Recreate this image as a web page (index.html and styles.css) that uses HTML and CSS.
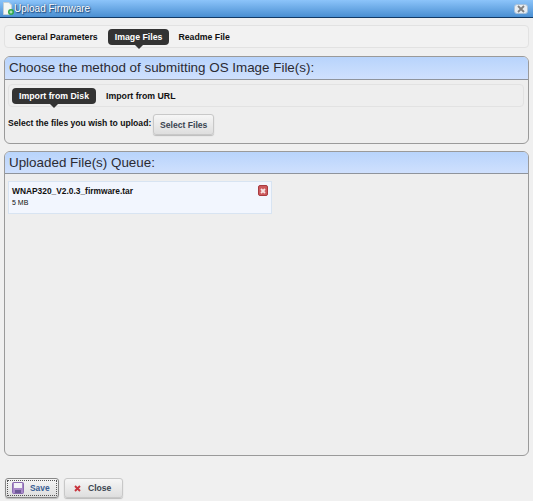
FILE: index.html
```html
<!DOCTYPE html>
<html lang="en">
<head>
<meta charset="UTF-8" />
<title>Upload Firmware</title>
<link rel="stylesheet" href="styles.css">
</head>
<body>
<div class="dialog">
  <div class="titlebar">
    <svg class="title-icon" width="11" height="13" viewBox="0 0 11 13">
      <path d="M0.5 0.5h5.5l2.5 2.5v9.5H0.5z" fill="#f4f6f4" stroke="#c5cfd5"/>
      <circle cx="8" cy="10" r="3" fill="#2fa84a"/>
      <path d="M8 8.5v3M6.5 10h3" stroke="#d8f5dc" stroke-width="1"/>
    </svg>
    <span class="title-text">Upload Firmware</span>
    <button type="button" class="title-close" aria-label="Close">
      <svg width="8" height="8" viewBox="0 0 8 8"><path d="M1 1l6 6M7 1L1 7" stroke="#808080" stroke-width="1.8"/></svg>
    </button>
  </div>

  <div class="content">
    <div class="tabs">
      <span class="tab">General Parameters</span>
      <span class="tab tab-active">Image Files</span>
      <span class="tab">Readme File</span>
    </div>

    <div class="panel panel-method">
      <div class="panel-head">Choose the method of submitting OS Image File(s):</div>
      <div class="panel-body">
        <div class="tabs tabs-sub">
          <span class="tab tab-active">Import from Disk</span>
          <span class="tab">Import from URL</span>
        </div>
        <div class="select-row">
          <span class="select-label">Select the files you wish to upload:</span>
          <button type="button" class="btn btn-select">Select Files</button>
        </div>
      </div>
    </div>

    <div class="panel panel-queue">
      <div class="panel-head">Uploaded File(s) Queue:</div>
      <div class="panel-body">
        <div class="file-item">
          <div>
            <div class="file-name">WNAP320_V2.0.3_firmware.tar</div>
            <div class="file-size">5 MB</div>
          </div>
          <span class="file-remove">
            <svg width="6" height="6" viewBox="0 0 6 6"><path d="M1 1l4 4M5 1L1 5" stroke="#f6e3e3" stroke-width="1.8"/></svg>
          </span>
        </div>
      </div>
    </div>

    <div class="actions">
      <button type="button" class="btn btn-save">
        <span class="focus-ring">
          <svg width="12" height="12" viewBox="0 0 12 12">
            <rect x="0.5" y="0.5" width="11" height="11" rx="1" fill="#a888c8" stroke="#8a6bb0"/>
            <rect x="2" y="1" width="8" height="5" fill="#f2f2f6"/>
            <rect x="3" y="8" width="6" height="3" fill="#6d5a96"/>
          </svg>
          Save
        </span>
      </button>
      <button type="button" class="btn btn-close">
        <svg width="7" height="7" viewBox="0 0 7 7"><path d="M1 1l5 5M6 1L1 6" stroke="#c8333c" stroke-width="1.9"/></svg>
        Close
      </button>
    </div>
  </div>
</div>
</body>
</html>
```

FILE: styles.css
```css
/* --- BASE --- */
*, *::before, *::after {
  box-sizing: border-box;
}
html, body {
  height: 100%;
}
body {
  margin: 0;
  background: #f0f0f0;
  font-family: "Liberation Sans", Arial, sans-serif;
  color: #111;
}
.dialog {
  height: 501px;
  display: flex;
  flex-direction: column;
}

/* --- TITLE BAR --- */
.titlebar {
  height: 18px;
  flex: none;
  display: flex;
  align-items: center;
  padding: 0 5px 0 3px;
  background: linear-gradient(#8cc4fa, #4a8fd2);
  border-bottom: 1px solid #123a66;
}
.title-icon {
  flex: none;
}
.title-text {
  font-size: 10px;
  color: #fff;
  text-shadow: 0 0 2px #1d4a7c, 1px 1px 1px #1d4a7c;
}
.title-close {
  margin-left: auto;
  width: 14px;
  height: 10px;
  padding: 0;
  display: flex;
  align-items: center;
  justify-content: center;
  background: #e8edf2;
  border: 1px solid #a9c2da;
  border-radius: 3px;
}

/* --- CONTENT --- */
.content {
  flex: 1;
  display: flex;
  flex-direction: column;
  padding: 7px 4px 3px;
}

/* --- TABS --- */
.tabs {
  height: 23px;
  flex: none;
  display: flex;
  align-items: center;
  padding-left: 4px;
  background: #f2f2f2;
  border: 1px solid #e2e2e2;
  border-radius: 4px;
}
.tab {
  position: relative;
  padding: 0 6px;
  font-size: 8.75px;
  font-weight: bold;
  line-height: 16px;
  white-space: nowrap;
}
.tab + .tab {
  margin-left: 4px;
}
.tab-active + .tab {
  margin-left: 3px;
}
.tab-active {
  padding: 0 7px;
  background: #333;
  color: #fff;
  border-radius: 4px;
}
.tabs-sub .tab-active + .tab {
  margin-left: 4px;
}
.tab-active::after {
  content: "";
  position: absolute;
  left: 50%;
  bottom: -4px;
  margin-left: -4px;
  border-left: 4px solid transparent;
  border-right: 4px solid transparent;
  border-top: 4px solid #333;
}

/* --- PANELS --- */
.panel {
  border: 1px solid #9a9a9a;
  border-radius: 6px;
  background: #eeeeee;
  overflow: hidden;
  display: flex;
  flex-direction: column;
}
.panel-method {
  flex: none;
  height: 88px;
  margin-top: 8px;
}
.panel-queue {
  flex: none;
  height: 305px;
  margin-top: 7px;
}
.panel-head {
  height: 23px;
  flex: none;
  padding-left: 4px;
  font-size: 13.4px;
  line-height: 22px;
  color: #2b2b33;
  background: linear-gradient(#b8d4fc, #cfe0fd);
  border-bottom: 1px solid #8f949c;
}
.panel-queue .panel-head {
  height: 22px;
  line-height: 21px;
}
.panel-body {
  flex: 1;
  padding: 4px 3px;
}
.tabs-sub {
  padding-left: 3px;
  margin-right: 1px;
  background: #eeeeee;
}
.select-row {
  display: flex;
  align-items: center;
  margin-top: 7px;
  font-size: 8.6px;
  font-weight: bold;
}
.select-label {
  position: relative;
  top: -2px;
}

/* --- BUTTONS --- */
.btn {
  font-family: "Liberation Sans", Arial, sans-serif;
  font-size: 8.6px;
  font-weight: bold;
  color: #3a4450;
  background: linear-gradient(#f6f6f6, #dedede);
  border: 1px solid #c8c8c8;
  border-radius: 3px;
  box-shadow: 0 1px 1px #bbb;
  padding: 0;
}
.btn-select {
  width: 61px;
  height: 21px;
  margin-left: 2px;
}

/* --- FILE ITEM --- */
.file-item {
  width: 264px;
  height: 33px;
  margin-top: 3px;
  display: flex;
  justify-content: space-between;
  padding: 4px 3px 0 3px;
  background: #f2f6fe;
  border: 1px solid #d8e4f2;
}
.file-name {
  font-size: 8.4px;
  font-weight: bold;
  line-height: 11px;
}
.file-size {
  font-size: 7px;
  line-height: 11px;
}
.file-remove {
  width: 10px;
  height: 11px;
  margin-top: -1px;
  display: flex;
  align-items: center;
  justify-content: center;
  background: #cc5a5e;
  border: 1px solid #a83b40;
  border-radius: 2px;
}

/* --- FOOTER ACTIONS --- */
.actions {
  display: flex;
  gap: 5px;
  margin-top: auto;
  margin-left: 1px;
}
.btn-save {
  width: 54px;
  height: 20px;
  padding: 1px;
  font-size: 8.4px;
  color: #3a5f94;
  border: 1px solid #888;
}
.focus-ring {
  height: 100%;
  display: flex;
  align-items: center;
  gap: 6px;
  border: 1px dotted #555;
  padding-left: 4px;
}
.btn-close {
  width: 59px;
  height: 20px;
  display: flex;
  align-items: center;
  padding-left: 9px;
  gap: 7px;
}
```
